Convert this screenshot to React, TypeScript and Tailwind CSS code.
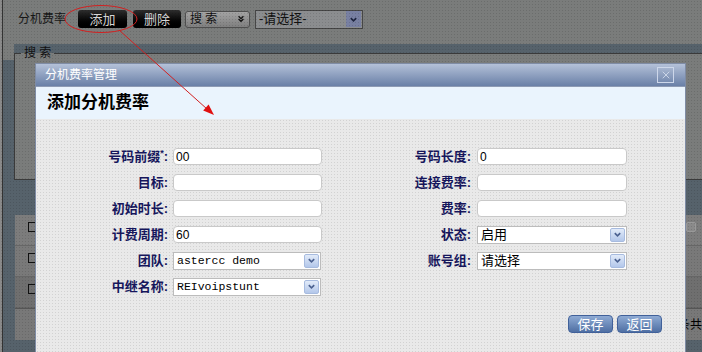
import { X } from "lucide-react";

const LABEL = "text-[13px] font-bold text-[#16165c] text-right whitespace-nowrap";
const INPUT = "h-[17px] bg-white border border-[#c9c9c9] rounded-[4px] text-[12px] text-black pl-[2px] flex items-center";

function Chevron({ className }: { className?: string }) {
  return (
    <svg viewBox="0 0 10 10" className={className}>
      <path d="M2 3.5 L5 6.5 L8 3.5" fill="none" stroke="currentColor" strokeWidth="1.8" />
    </svg>
  );
}

function Field({ value }: { value?: string }) {
  return <div className={`${INPUT} w-[149px]`}>{value}</div>;
}

function Select({ value, width, mono }: { value: string; width: string; mono?: boolean }) {
  return (
    <div className={`h-[18px] ${width} bg-white border border-[#bcbcbc] flex items-center justify-between`}>
      <span
        className={
          mono
            ? "pl-[3px] text-[11.5px] font-['Liberation_Mono',monospace] text-black"
            : "pl-[3px] text-[13px] text-black"
        }
      >
        {value}
      </span>
      <span className="w-[15px] h-[14px] mr-[1px] bg-gradient-to-b from-[#e2ebf9] to-[#b3c7ea] border border-[#a7bbdf] rounded-[2px] flex items-center justify-center text-[#4b6190]">
        <Chevron className="w-[9px] h-[9px]" />
      </span>
    </div>
  );
}

function Row({ children }: { children: React.ReactNode }) {
  return <div className="flex items-center h-[17px]">{children}</div>;
}

export default function App() {
  return (
    <div className="relative w-[702px] h-[352px] overflow-hidden bg-[#56626b] font-['Liberation_Sans','Noto_Sans_CJK_SC',sans-serif] flex">
      {/* left edge */}
      <div className="w-[3px] bg-[#8a8a8a] border-r border-[#333]" />

      {/* page behind the dialog */}
      <div className="flex-1 flex flex-col">
        <div className="h-[44px] bg-[#7a7c7b]">
          <div className="h-[38px] flex items-center pl-[15px]">
            <span className="text-[12px] text-[#161616]">分机费率</span>
            <button className="ml-[12px] w-[49px] h-[18px] rounded-[3px] bg-gradient-to-b from-[#2e2e2e] to-[#000] text-[13px] text-[#d6d6d6] leading-none">
              添加
            </button>
            <button className="ml-[6px] w-[48px] h-[18px] rounded-[3px] bg-gradient-to-b from-[#2e2e2e] to-[#000] text-[13px] text-[#d6d6d6] leading-none">
              删除
            </button>
            <div className="ml-[4px] w-[65px] h-[17px] rounded-[3px] border border-[#4e4e4e] bg-gradient-to-b from-[#a3a3a3] to-[#7f7f7f] flex items-center justify-between px-[4px]">
              <span className="text-[12px] text-[#111]">搜 索</span>
              <svg viewBox="0 0 10 10" className="w-[8px] h-[8px] text-[#111]">
                <path d="M2 1.5 L5 4.5 L8 1.5 M2 5 L5 8 L8 5" fill="none" stroke="currentColor" strokeWidth="1.6" />
              </svg>
            </div>
            <div className="ml-[5px] w-[108px] h-[19px] border border-[#464646] bg-[#8b8d8f] flex items-center justify-between">
              <span className="pl-[3px] text-[13px] text-[#111]">-请选择-</span>
              <span className="w-[15px] h-[16px] mr-[1px] bg-[#7880a2] flex items-center justify-center text-[#1f2540]">
                <Chevron className="w-[9px] h-[9px]" />
              </span>
            </div>
          </div>
        </div>

        <div className="flex bg-[#56626b]">
          <div className="w-[11px] h-[16px] bg-[#7a7c7b]" />
          <fieldset className="flex-1 h-[136px] bg-[#7a7c7b] border border-r-0 border-[#3a3a3a]">
            <legend className="ml-[6px] px-[3px] text-[12px] text-[#111]">搜 索</legend>
          </fieldset>
        </div>

        <div className="h-[35px]" />

        <div className="ml-[12px] flex flex-col">
          {["bg-[#7c7c7c]", "bg-[#797979]", "bg-[#6f6f6f]"].map((c, i) => (
            <div key={i} className={`h-[31px] ${c} border-b border-[#666] flex items-start justify-between pt-[7px] pl-[13px]`}>
              <span className="w-[10px] h-[10px] border border-[#111]" />
              {i === 0 && <span className="mr-[6px] w-[10px] h-[10px] rounded-[2px] border border-[#999] bg-[#8a8a8a]" />}
            </div>
          ))}
          <div className="h-[32px] bg-[#787878] border-t border-[#555] flex items-center justify-end overflow-hidden whitespace-nowrap">
            <span className="text-[12px] text-black">条共</span>
          </div>
        </div>
      </div>

      {/* modal mask texture */}
      <div className="absolute inset-0 pointer-events-none bg-[radial-gradient(circle,rgba(0,0,0,0.12)_0.8px,transparent_1px)] bg-[length:3px_3px]" />

      {/* dialog */}
      <div className="absolute left-[35px] top-[63px] w-[651px] h-[300px] border border-[#7f8ca5] flex flex-col">
        <div className="h-[22px] bg-gradient-to-b from-[#b4c1d8] to-[#6a80a7] flex items-center justify-between pl-[9px] pr-[11px]">
          <span className="text-[12px] text-white">分机费率管理</span>
          <span className="w-[17px] h-[16px] border border-[#cdd7ea] flex items-center justify-center text-[#dde5f3]">
            <X className="w-[12px] h-[12px]" strokeWidth={1.5} />
          </span>
        </div>
        <div className="h-[33px] bg-[#eaf4fd] border-t border-[#8e9bb4] flex items-center pl-[11px]">
          <span className="text-[17px] font-bold text-black">添加分机费率</span>
        </div>
        <div className="flex-1 bg-[#e9e9e9] bg-[radial-gradient(circle,#d2d2d2_0.8px,transparent_1px)] bg-[length:3px_3px] pt-[29px] flex flex-col gap-[9px]">
          <Row>
            <span className={`${LABEL} w-[132px]`}>
              号码前缀<span className="text-[9px] align-top">*</span>:
            </span>
            <div className="ml-[5px]"><Field value="00" /></div>
            <span className={`${LABEL} w-[149px]`}>号码长度:</span>
            <div className={`${INPUT} ml-[6px] w-[150px]`}>0</div>
          </Row>
          <Row>
            <span className={`${LABEL} w-[132px]`}>目标:</span>
            <div className="ml-[5px]"><Field /></div>
            <span className={`${LABEL} w-[149px]`}>连接费率:</span>
            <div className={`${INPUT} ml-[6px] w-[150px]`} />
          </Row>
          <Row>
            <span className={`${LABEL} w-[132px]`}>初始时长:</span>
            <div className="ml-[5px]"><Field /></div>
            <span className={`${LABEL} w-[149px]`}>费率:</span>
            <div className={`${INPUT} ml-[6px] w-[150px]`} />
          </Row>
          <Row>
            <span className={`${LABEL} w-[132px]`}>计费周期:</span>
            <div className="ml-[5px]"><Field value="60" /></div>
            <span className={`${LABEL} w-[149px]`}>状态:</span>
            <div className="ml-[6px]"><Select value="启用" width="w-[150px]" /></div>
          </Row>
          <Row>
            <span className={`${LABEL} w-[132px]`}>团队:</span>
            <div className="ml-[5px]"><Select value="astercc demo" width="w-[148px]" mono /></div>
            <span className={`${LABEL} w-[150px]`}>账号组:</span>
            <div className="ml-[6px]"><Select value="请选择" width="w-[150px]" /></div>
          </Row>
          <Row>
            <span className={`${LABEL} w-[132px]`}>中继名称:</span>
            <div className="ml-[5px]"><Select value="REIvoipstunt" width="w-[148px]" mono /></div>
          </Row>

          <div className="mt-[11px] flex gap-[4px] pl-[532px]">
            {["保存", "返回"].map((t) => (
              <button
                key={t}
                className="w-[45px] h-[18px] rounded-[4px] border border-[#41619a] bg-gradient-to-b from-[#8fabd4] to-[#4f6fa3] text-[13px] text-white leading-none"
              >
                {t}
              </button>
            ))}
          </div>
        </div>
      </div>

      {/* red annotation */}
      <svg className="absolute inset-0 pointer-events-none" width="702" height="352">
        <ellipse cx="101" cy="19" rx="36" ry="13.5" fill="none" stroke="#d22020" strokeWidth="1" />
        <line x1="119" y1="30" x2="207" y2="109" stroke="#d22020" strokeWidth="1" />
        <polygon points="214,115 203.2,110.5 208.6,104.6" fill="#e01010" />
      </svg>
    </div>
  );
}
